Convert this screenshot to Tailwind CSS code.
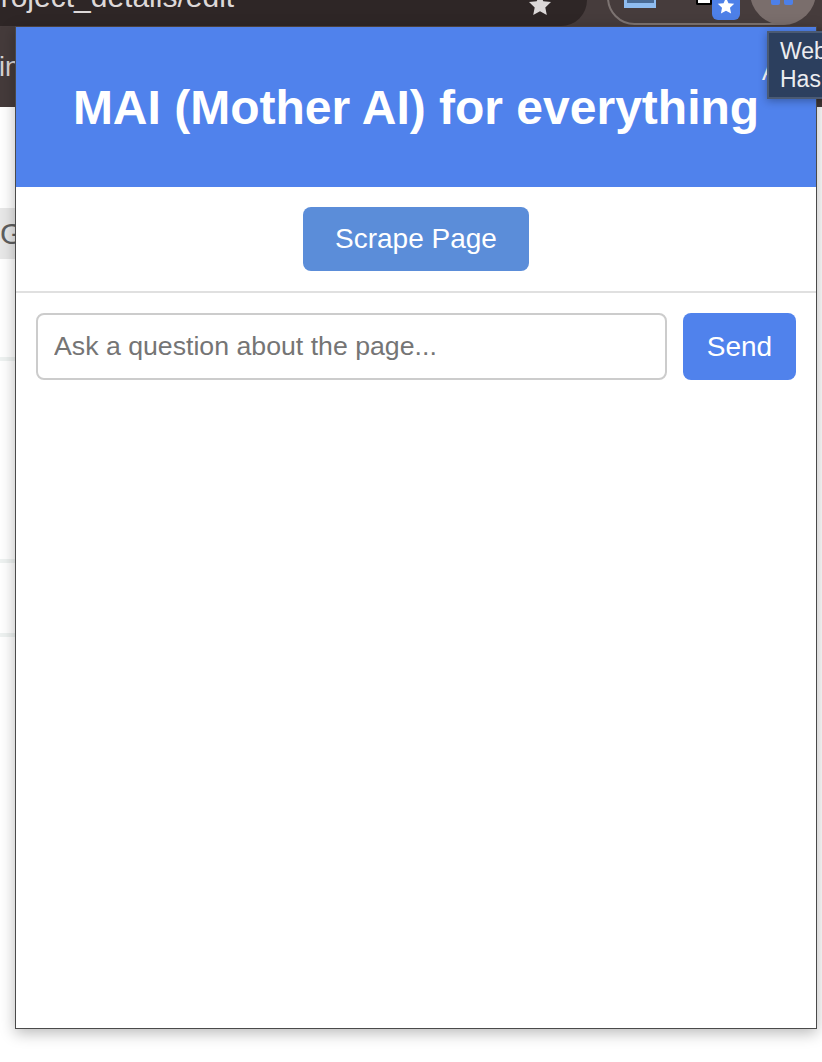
<!DOCTYPE html>
<html lang="en">
<head>
  <meta charset="UTF-8" />
  <title>MAI (Mother AI) for everything</title>
  <script src="https://cdn.jsdelivr.net/npm/@tailwindcss/browser@4"></script>
</head>
<body class="bg-white font-['Liberation_Sans',Arial,sans-serif]">
  <div class="relative w-[822px] h-[1062px] overflow-hidden bg-white">

    <!-- browser toolbar -->
    <div class="flex h-[27px] bg-[#463c3c] relative">
      <div class="w-[587px] h-[26px] bg-[#2e2626] rounded-br-[26px] overflow-hidden relative">
        <div class="text-[30px] leading-[24px] text-[#ddd8d8] absolute left-[-16px] top-[-15px] whitespace-nowrap">project_details/edit</div>
        <svg class="absolute left-[528px] top-[-7px]" width="24" height="24" viewBox="0 0 24 24"><path fill="#dcd8d8" d="M12 1l3.300 7.200 7.700.9-5.700 5.300 1.500 7.600L12 18.200 5.200 22l1.500-7.600L1 9.100l7.700-.9z"/></svg>
      </div>
      <div class="absolute left-[607px] top-[-30px] w-[200px] h-[55px] border-2 border-[#7d7472] rounded-[28px]"></div>
      <div class="absolute left-[624px] top-0 w-[32px] h-[8px] bg-[#8fbdf0]"><div class="h-[3px] w-[27px] mx-auto bg-[#4a6c96]"></div></div>
      <div class="absolute left-[696px] top-0 w-[16px] h-[5px] bg-white border-2 border-t-0 border-black rounded-b-[2px]"></div>
      <div class="absolute left-[712px] top-[-8px] w-[28px] h-[28px] bg-[#4d80e8] rounded-[6px] flex items-center justify-center">
        <svg width="18" height="18" viewBox="0 0 24 24"><path fill="#fff" d="M12 1l3.300 7.200 7.700.9-5.700 5.300 1.500 7.600L12 18.200 5.200 22l1.500-7.600L1 9.100l7.700-.9z"/></svg>
      </div>
      <div class="absolute left-[750px] top-[-41px] w-[66px] h-[66px] rounded-full bg-[#7a6e6c]"></div>
      <div class="absolute left-[771px] top-0 w-[9px] h-[5px] bg-[#4d80e8] rounded-b-[2px]"></div>
      <div class="absolute left-[784px] top-0 w-[9px] h-[5px] bg-[#4d80e8] rounded-b-[2px]"></div>
    </div>

    <!-- bookmarks bar -->
    <div class="h-[80px] bg-[#453b3b] flex items-center text-[27px] text-[#d8d4d4] overflow-hidden">
      <span class="ml-[-1px]">in</span>
    </div>

    <!-- page behind the popup -->
    <div class="relative w-[15px]">
      <div class="mt-[101px] h-[51px] bg-[#e8e8e8] text-[#5f5f5f] text-[30px] leading-[51px] overflow-hidden">G</div>
      <div class="mt-[98px] h-[4px] bg-[#eef2f1]"></div>
      <div class="mt-[198px] h-[4px] bg-[#eef2f1]"></div>
      <div class="mt-[70px] h-[4px] bg-[#eef2f1]"></div>
    </div>

    <!-- extension popup -->
    <div class="absolute left-[15px] top-[26px] w-[802px] h-[1003px] bg-white border border-[#4a4a4a] border-t-[#4a403f] shadow-[0_4px_14px_rgba(0,0,0,0.28)] flex flex-col">
      <div class="h-[160px] bg-[#5082ec] shrink-0 flex items-center justify-center">
        <h1 class="text-[48px] font-bold text-white leading-none whitespace-nowrap mt-[2px]">MAI (Mother AI) for everything</h1>
      </div>
      <div class="h-[106px] shrink-0 flex justify-center pt-[20px] border-b-2 border-[#e0e0e0]">
        <button class="w-[226px] h-[64px] rounded-[8px] bg-[#5b8dd9] text-white text-[28px]">Scrape Page</button>
      </div>
      <div class="flex gap-[16px] px-[20px] pt-[20px]">
        <input class="w-[631px] h-[67px] rounded-[8px] border-2 border-[#cccccc] px-[16px] text-[26.700px] placeholder:text-[#757575] outline-none" placeholder="Ask a question about the page..." />
        <button class="w-[113px] h-[67px] rounded-[8px] bg-[#5082ec] text-white text-[28px]">Send</button>
      </div>
    </div>

    <!-- "A" peeking out beside the tooltip -->
    <div class="absolute left-[762px] top-[60px] text-[24px] leading-none text-white">A</div>

    <!-- tooltip -->
    <div class="absolute left-[767px] top-[31px] w-[70px] h-[68px] bg-[#2c3f5e] border-2 border-[#4a5a74] pl-[11px] pt-[4px] text-[23px] leading-[28px] text-[#ecedf0] shadow-[0_2px_8px_rgba(0,0,0,0.3)]">
      <div>Web</div>
      <div>Has</div>
    </div>
  </div>
</body>
</html>
